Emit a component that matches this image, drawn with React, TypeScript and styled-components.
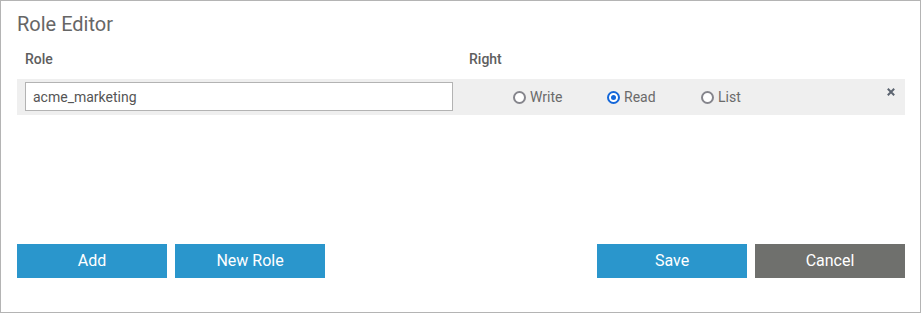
import React, { useState } from "react";
import styled, { createGlobalStyle } from "styled-components";

const GlobalStyle = createGlobalStyle`
  html, body { margin: 0; padding: 0; background: #ffffff; }
  body { font-family: Roboto, "Noto Sans", Arial, sans-serif; }
  * { box-sizing: border-box; }
`;

const Panel = styled.div`
  width: 921px;
  height: 313px;
  border: 1px solid #b4b4b4;
  padding: 11px 15px 34px 16px;
  display: flex;
  flex-direction: column;
  background: #fff;
`;

const Title = styled.h2`
  margin: 0;
  font-size: 20px;
  line-height: 24px;
  font-weight: 400;
  color: #666666;
`;

const HeaderRow = styled.div`
  display: grid;
  grid-template-columns: 444px 1fr;
  margin-top: 15px;
  font-size: 14px;
  line-height: 16px;
  font-weight: 500;
  color: #5e5e5e;
`;

const HeaderCell = styled.div`
  padding: 0 8px;
`;

const DataRow = styled.div`
  display: grid;
  grid-template-columns: 444px 1fr auto;
  align-items: center;
  margin-top: 12px;
  height: 36px;
  background: #efefef;
`;

const InputCell = styled.div`
  padding: 0 8px;
  display: flex;
  align-items: center;
`;

const TextInput = styled.input`
  width: 428px;
  height: 29px;
  border: 1px solid #b3b3b3;
  background: #fff;
  padding: 0 7px;
  font-family: Roboto, "Noto Sans", Arial, sans-serif;
  font-size: 14px;
  color: #555555;
  outline: none;
  margin-top: -1px;
`;

const RadioGroup = styled.div`
  display: flex;
  align-items: center;
  padding-left: 52px;
`;

const RadioLabel = styled.label`
  width: 94px;
  display: flex;
  align-items: center;
  font-size: 14px;
  color: #6a6a6a;
  cursor: pointer;
`;

const RadioInput = styled.input`
  appearance: none;
  -webkit-appearance: none;
  width: 13px;
  height: 13px;
  margin: 0 4px 0 0;
  border-radius: 50%;
  border: 2px solid #85858c;
  background: #fff;
  display: grid;
  place-content: center;
  flex: none;

  &:checked {
    border-color: #1467d9;
  }
  &:checked::before {
    content: "";
    width: 5px;
    height: 5px;
    border-radius: 50%;
    background: #1467d9;
  }
`;

const RemoveButton = styled.button`
  align-self: start;
  margin: 9px 10px 0 0;
  padding: 0;
  border: none;
  background: transparent;
  width: 8px;
  height: 8px;
  display: flex;
  cursor: pointer;
`;

const Footer = styled.div`
  margin-top: auto;
  display: flex;
  align-items: center;
  gap: 8px;
`;

const Spacer = styled.div`
  flex: 1;
`;

const Button = styled.button<{ $variant?: "primary" | "secondary" }>`
  width: 150px;
  height: 34px;
  border: none;
  padding: 0 0 2px;
  background: ${(p) => (p.$variant === "secondary" ? "#6f706d" : "#2a96cc")};
  color: #ffffff;
  font-family: Roboto, "Noto Sans", Arial, sans-serif;
  font-size: 16px;
  font-weight: 400;
  cursor: pointer;
`;

const rights = ["Write", "Read", "List"];

export default function App() {
  const [right, setRight] = useState("Read");
  const [role, setRole] = useState("acme_marketing");
  return (
    <>
      <GlobalStyle />
      <Panel>
        <Title>Role Editor</Title>
        <HeaderRow>
          <HeaderCell>Role</HeaderCell>
          <HeaderCell>Right</HeaderCell>
        </HeaderRow>
        <DataRow>
          <InputCell>
            <TextInput value={role} onChange={(e) => setRole(e.target.value)} />
          </InputCell>
          <RadioGroup>
            {rights.map((r) => (
              <RadioLabel key={r}>
                <RadioInput
                  type="radio"
                  name="right"
                  checked={right === r}
                  onChange={() => setRight(r)}
                />
                {r}
              </RadioLabel>
            ))}
          </RadioGroup>
          <RemoveButton aria-label="Remove">
            <svg width="8" height="8" viewBox="0 0 8 8">
              <path d="M0.8 0.8 L7.2 7.2 M7.2 0.8 L0.8 7.2" stroke="#5c6470" strokeWidth="2" strokeLinecap="butt" />
            </svg>
          </RemoveButton>
        </DataRow>
        <Footer>
          <Button>Add</Button>
          <Button>New Role</Button>
          <Spacer />
          <Button>Save</Button>
          <Button $variant="secondary">Cancel</Button>
        </Footer>
      </Panel>
    </>
  );
}
